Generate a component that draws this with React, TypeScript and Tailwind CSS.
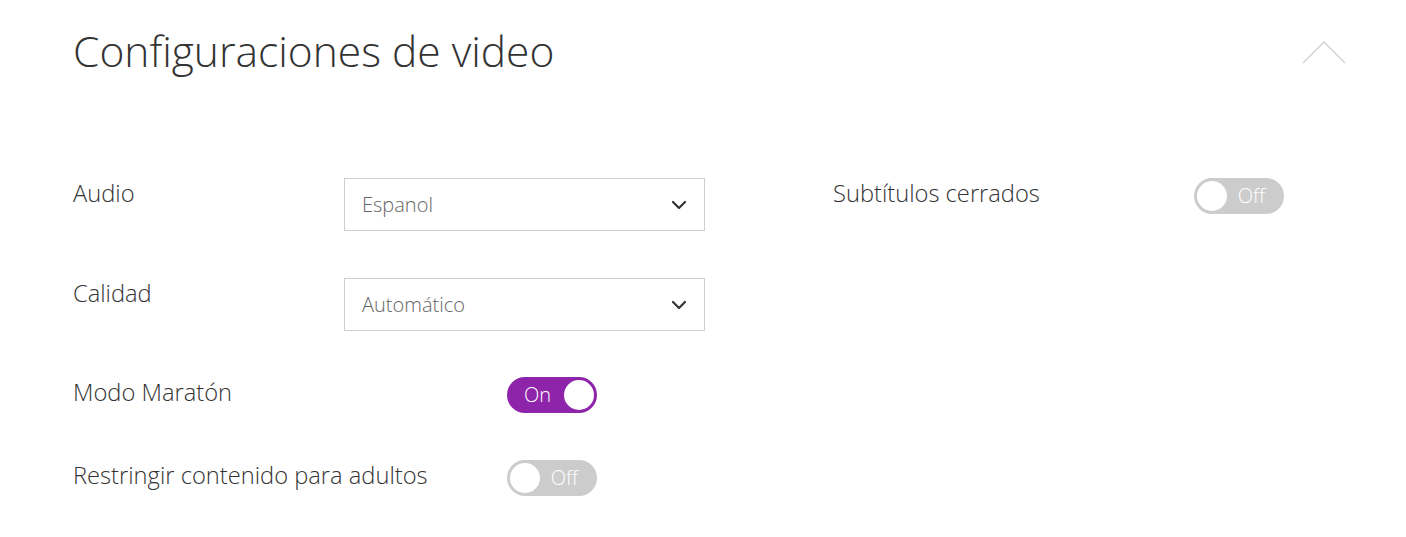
import React from 'react';

const font = { fontFamily: '"Open Sans", "Liberation Sans", sans-serif' };

const Chevron = () => (
  <svg width="16" height="10" viewBox="0 0 16 10" fill="none">
    <path d="M2 2l6 6 6-6" stroke="#333" strokeWidth="2.2" strokeLinecap="round" strokeLinejoin="round" />
  </svg>
);

const Select = ({ value }: { value: string }) => (
  <div className="flex h-[53px] w-[361px] items-center justify-between border border-[#cfcfcf] bg-white pl-[17px] pr-[17px]">
    <span className="text-[20px] font-light text-[#666]">{value}</span>
    <Chevron />
  </div>
);

const Toggle = ({ on }: { on: boolean }) =>
  on ? (
    <div className="flex h-[36px] w-[90px] items-center justify-between rounded-full bg-[#8e24aa] pl-[17px] pr-[3px]">
      <span className="text-[20px] font-light text-white">On</span>
      <span className="h-[30px] w-[30px] rounded-full bg-white" />
    </div>
  ) : (
    <div className="flex h-[36px] w-[90px] items-center justify-between rounded-full bg-[#cccccc] pl-[3px] pr-[19px]">
      <span className="h-[30px] w-[30px] rounded-full bg-white" />
      <span className="text-[20px] font-light text-white">Off</span>
    </div>
  );

export default function App() {
  return (
    <div className="min-h-[537px] w-[1406px] bg-white text-[#333]" style={font}>
      <div className="flex items-start justify-between pl-[73px] pr-[60px] pt-[22px]">
        <h1 className="text-[42.5px] font-light leading-[58px]">Configuraciones de video</h1>
        <svg width="44" height="24" viewBox="0 0 44 24" fill="none" className="mt-[18px]">
          <path d="M1 23L22 2l21 21" stroke="#d6d6d6" strokeWidth="1.6" />
        </svg>
      </div>
      <div className="mt-[98px] flex pl-[73px]">
        <div className="flex w-[760px] flex-col">
          <div className="flex items-start">
            <span className="w-[271px] text-[23.7px] font-light leading-[30px]">Audio</span>
            <Select value="Espanol" />
          </div>
          <div className="mt-[47px] flex items-start">
            <span className="w-[271px] text-[23.7px] font-light leading-[30px]">Calidad</span>
            <Select value="Automático" />
          </div>
          <div className="mt-[46px] flex items-start">
            <span className="w-[434px] text-[23.7px] font-light leading-[30px]">Modo Maratón</span>
            <Toggle on />
          </div>
          <div className="mt-[47px] flex items-start">
            <span className="w-[434px] text-[23.7px] font-light leading-[30px]">Restringir contenido para adultos</span>
            <Toggle on={false} />
          </div>
        </div>
        <div className="flex items-start">
          <span className="w-[361px] text-[23.7px] font-light leading-[30px]">Subtítulos cerrados</span>
          <Toggle on={false} />
        </div>
      </div>
    </div>
  );
}
